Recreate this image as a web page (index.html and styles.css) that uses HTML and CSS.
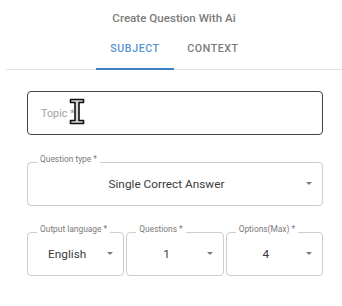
FILE: index.html
```html
<!DOCTYPE html>
<html>
<head>
<meta charset="utf-8">
<link rel="stylesheet" href="styles.css">
</head>
<body>
<div class="dialog">
  <div class="title">Create Question With Ai</div>
  <div class="tabs">
    <div class="tab active">SUBJECT</div>
    <div class="tab">CONTEXT</div>
  </div>
  <div class="form">
    <div class="field topic">
      <span class="placeholder">Topic *</span>
      <svg class="cursor" width="16" height="27" viewBox="0 0 16 27">
        <path d="M1.5 1.5 H14.5 V4.5 H10 V22.5 H14.5 V25.5 H1.5 V22.5 H6 V4.5 H1.5 Z" fill="#d6d6d6" stroke="#111" stroke-width="1.6" stroke-linejoin="round"/>
      </svg>
    </div>
    <div class="field select">
      <span class="label">Question type *</span>
      <span class="value">Single Correct Answer</span>
      <span class="arrow"></span>
    </div>
    <div class="row">
      <div class="field select">
        <span class="label">Output language *</span>
        <span class="value">English</span>
        <span class="arrow"></span>
      </div>
      <div class="field select">
        <span class="label">Questions *</span>
        <span class="value">1</span>
        <span class="arrow"></span>
      </div>
      <div class="field select">
        <span class="label">Options(Max) *</span>
        <span class="value">4</span>
        <span class="arrow"></span>
      </div>
    </div>
  </div>
</div>
</body>
</html>
```
FILE: styles.css
```css
* { box-sizing: border-box; }
html, body { margin: 0; padding: 0; background: #fff; }
body { font-family: Roboto, "Noto Sans", Arial, sans-serif; width: 342px; height: 306px; overflow: hidden; }

.dialog { display: flex; flex-direction: column; }

.title {
  padding-top: 11px;
  height: 25px;
  text-align: center;
  font-size: 11.6px;
  line-height: 14px;
  font-weight: 500;
  color: #7c7c7c;
  margin-left: 6px;
}

.tabs {
  margin-left: 6px;
  display: flex;
  justify-content: center;
  border-bottom: 1px solid #e2e2e2;
  height: 45px;
}

.tab {
  width: 78px;
  text-align: center;
  font-size: 10.6px;
  font-weight: 500;
  letter-spacing: 0.6px;
  color: #7a7a7a;
  padding-top: 17px;
  line-height: 14px;
  position: relative;
}

.tab.active { color: #5593d2; }
.tab.active::after {
  content: "";
  position: absolute;
  left: 0; right: 0; bottom: -1px;
  height: 2px;
  background: #3d7fc6;
}

.form {
  padding: 21px 19px 0 27px;
  display: flex;
  flex-direction: column;
  gap: 27px;
}

.field {
  position: relative;
  height: 44px;
  border: 1px solid #cdcdcd;
  border-radius: 4px;
  display: flex;
  align-items: center;
}

.field.topic {
  border-color: #444;
  padding-left: 13px;
}

.placeholder {
  font-size: 10.8px;
  color: #a2a2a2;
}

.cursor {
  position: absolute;
  left: 41px;
  top: 6px;
}

.select {
  padding: 0 30px 0 13px;
  justify-content: center;
}

.value {
  font-size: 11.8px;
  color: #3a3a3a;
}

.label {
  position: absolute;
  top: -9px;
  left: 9px;
  padding: 0 3px;
  background: #fff;
  font-size: 8.4px;
  line-height: 10px;
  color: #7a7a7a;
}

.arrow {
  position: absolute;
  right: 10px;
  top: 50%;
  margin-top: -2px;
  width: 0; height: 0;
  border-left: 3.5px solid transparent;
  border-right: 3.5px solid transparent;
  border-top: 3.5px solid #7a7a7a;
}

.row {
  display: grid;
  grid-template-columns: 1fr 1fr 1fr;
  gap: 2px;
  margin-top: -1px;
}
```
